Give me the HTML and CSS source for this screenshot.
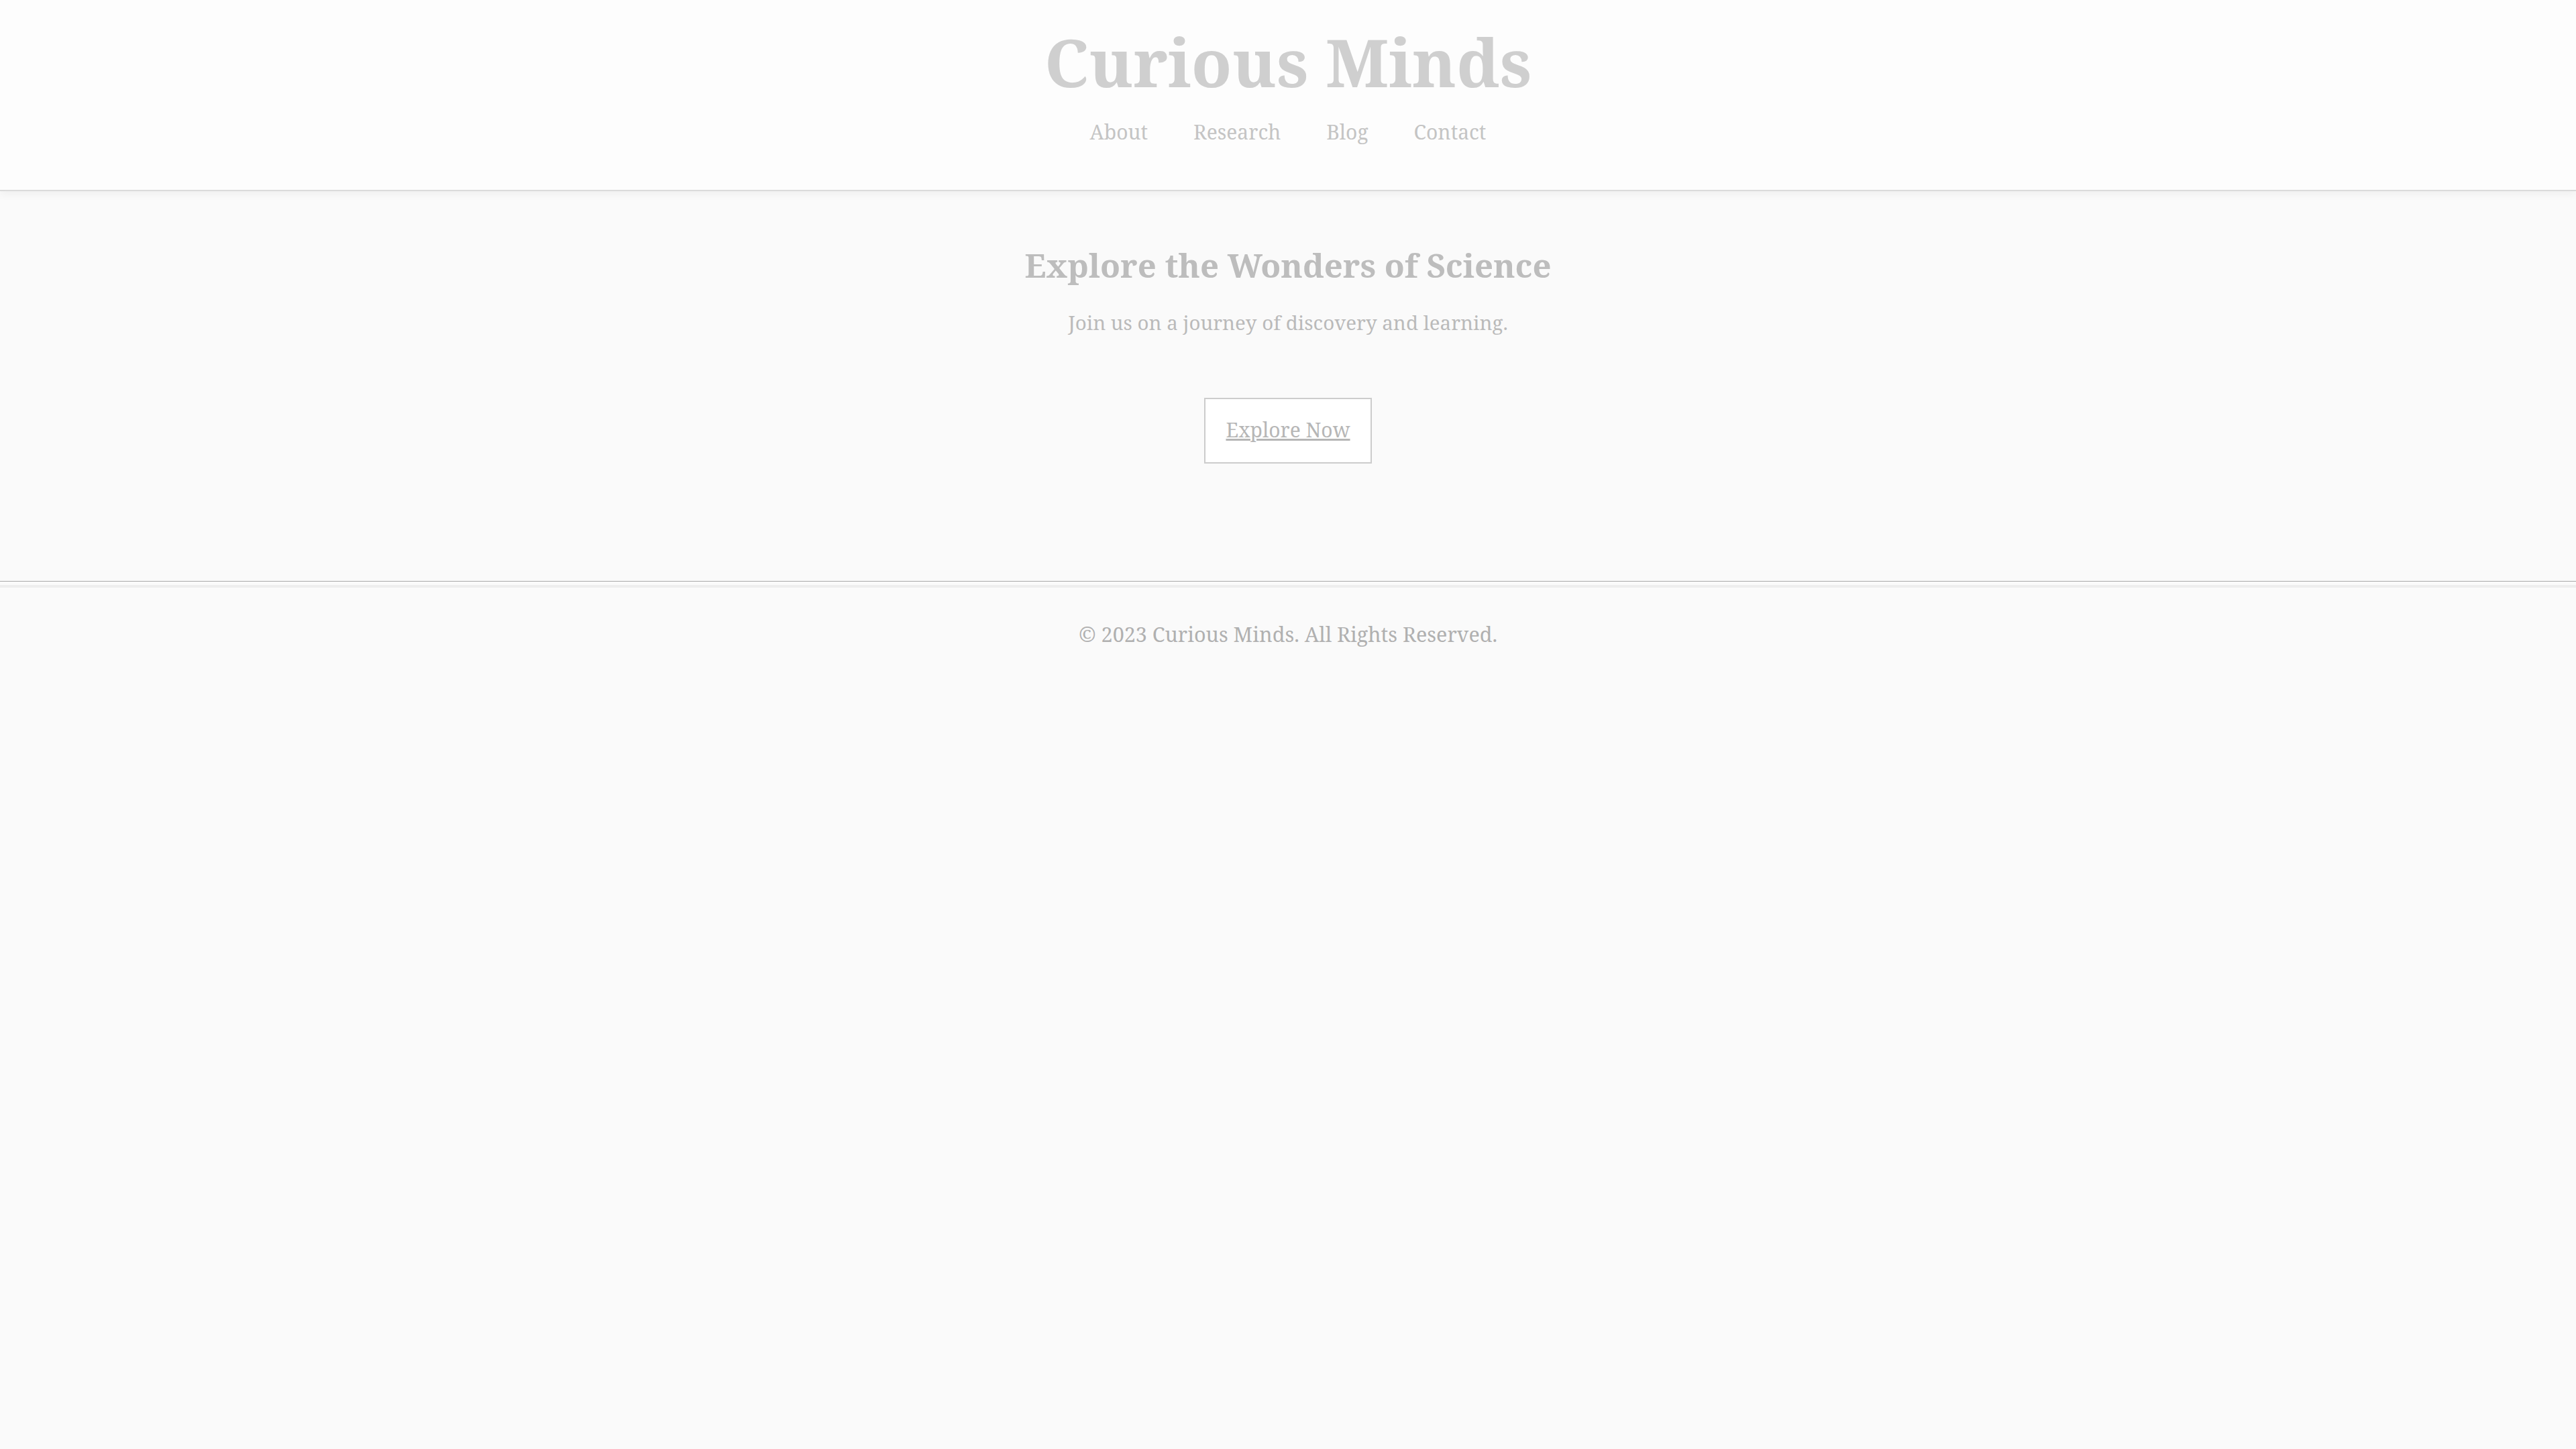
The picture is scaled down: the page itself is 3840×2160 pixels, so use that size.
FILE: index.html
```html
<!DOCTYPE html>
<html lang="en">
<head>
<meta charset="utf-8">
<title>Curious Minds</title>
<link rel="stylesheet" href="styles.css">
</head>
<body>
<header class="site-header">
  <h1 class="site-title">Curious Minds</h1>
  <nav class="site-nav">
    <a href="#" class="nav-link">About</a>
    <a href="#" class="nav-link">Research</a>
    <a href="#" class="nav-link">Blog</a>
    <a href="#" class="nav-link">Contact</a>
  </nav>
</header>
<main class="hero">
  <h2 class="hero-title">Explore the Wonders of Science</h2>
  <p class="hero-text">Join us on a journey of discovery and learning.</p>
  <a href="#" class="hero-button">Explore Now</a>
</main>
<footer class="site-footer">
  <p class="footer-text">&copy; 2023 Curious Minds. All Rights Reserved.</p>
</footer>
</body>
</html>
```

FILE: styles.css
```css
html, body {
  margin: 0;
  padding: 0;
}
body {
  background: #fafafa;
  font-family: "Noto Serif", "DejaVu Serif", serif;
  color: #bababa;
}
.site-header {
  background: #fdfdfd;
  text-align: center;
  padding: 42px 0 71px;
  border-bottom: 2px solid #dadada;
  box-shadow: 0 4px 12px rgba(0, 0, 0, 0.05);
}
.site-title {
  margin: 0;
  font-size: 99px;
  line-height: 99px;
  font-weight: bold;
  color: #cfcfcf;
}
.site-nav {
  display: flex;
  justify-content: center;
  gap: 68px;
  margin-top: 41px;
}
.nav-link {
  font-size: 30px;
  line-height: 30px;
  color: #c4c4c4;
  text-decoration: none;
}
.hero {
  display: flex;
  flex-direction: column;
  align-items: center;
  text-align: center;
  padding: 86px 0 175px;
}
.hero-title {
  margin: 0;
  font-size: 49px;
  line-height: 49px;
  font-weight: bold;
  color: #bdbdbd;
}
.hero-text {
  margin: 46px 0 97px;
  font-size: 29.5px;
  line-height: 30px;
}
.hero-button {
  display: block;
  padding: 31px 30px 33px;
  background: #ffffff;
  border: 2px solid #cccccc;
  font-size: 30px;
  line-height: 30px;
  color: #b6b6b6;
}
.site-footer {
  border-top: 1px solid #a8a8a8;
  box-shadow: inset 0 5px 0 #fafafa, inset 0 9px 0 #eeeeee;
  text-align: center;
  padding: 63px 0 58px;
}
.footer-text {
  margin: 0;
  font-size: 30.5px;
  line-height: 31px;
  color: #b0b0b0;
}
```
